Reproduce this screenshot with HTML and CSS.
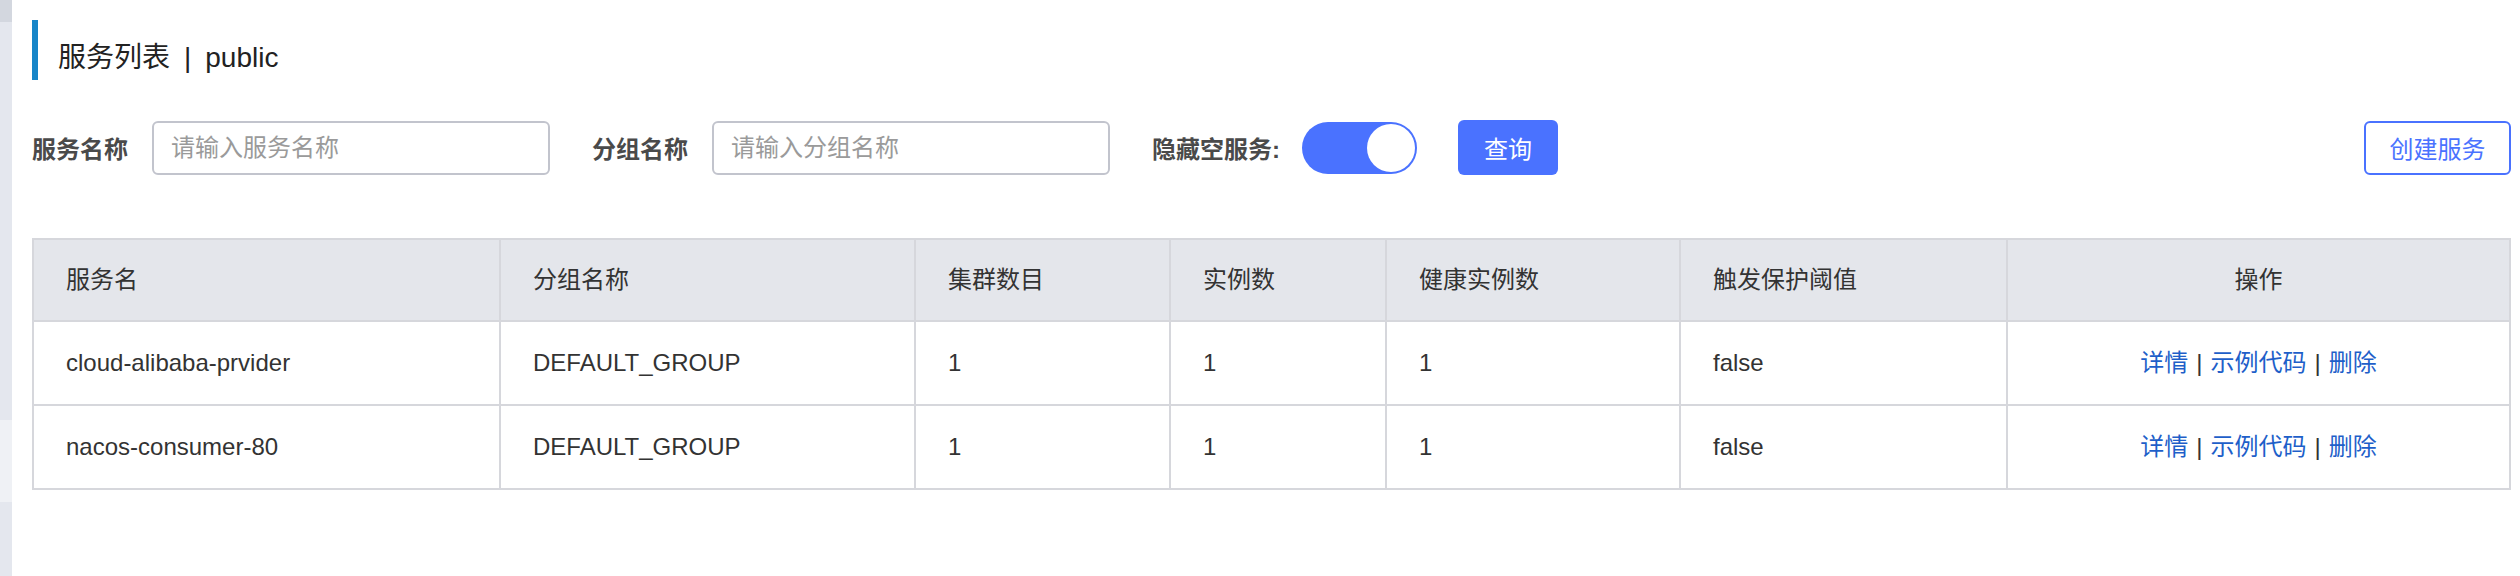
FILE: index.html
```html
<!DOCTYPE html>
<html lang="zh-CN">
<head>
<meta charset="utf-8">
<title>服务列表</title>
<link rel="stylesheet" href="styles.css">
</head>
<body>
<div class="page">
  <aside class="rail">
    <div class="rail-top"></div>
    <div class="rail-mid"></div>
    <div class="rail-light"></div>
    <div class="rail-bottom"></div>
  </aside>
  <main class="main">
    <h1 class="title"><span>服务列表</span><span class="sep">|</span><span>public</span></h1>
    <form class="filters">
      <label class="flabel">服务名称</label>
      <input class="finput" type="text" placeholder="请输入服务名称">
      <label class="flabel spaced">分组名称</label>
      <input class="finput" type="text" placeholder="请输入分组名称">
      <label class="flabel spaced">隐藏空服务:</label>
      <span class="switch"><span class="knob"></span></span>
      <button class="btn-primary" type="button">查询</button>
      <button class="btn-outline" type="button">创建服务</button>
    </form>
    <table class="grid">
      <colgroup>
        <col class="c1"><col class="c2"><col class="c3"><col class="c4"><col class="c5"><col class="c6"><col class="c7">
      </colgroup>
      <thead>
        <tr>
          <th>服务名</th>
          <th>分组名称</th>
          <th>集群数目</th>
          <th>实例数</th>
          <th>健康实例数</th>
          <th>触发保护阈值</th>
          <th class="center">操作</th>
        </tr>
      </thead>
      <tbody>
        <tr>
          <td>cloud-alibaba-prvider</td>
          <td>DEFAULT_GROUP</td>
          <td>1</td>
          <td>1</td>
          <td>1</td>
          <td>false</td>
          <td class="center"><a class="link">详情</a><span class="bar">|</span><a class="link">示例代码</a><span class="bar">|</span><a class="link">删除</a></td>
        </tr>
        <tr>
          <td>nacos-consumer-80</td>
          <td>DEFAULT_GROUP</td>
          <td>1</td>
          <td>1</td>
          <td>1</td>
          <td>false</td>
          <td class="center"><a class="link">详情</a><span class="bar">|</span><a class="link">示例代码</a><span class="bar">|</span><a class="link">删除</a></td>
        </tr>
      </tbody>
    </table>
  </main>
</div>
</body>
</html>
```

FILE: styles.css
```css
* {
  box-sizing: border-box;
}

html, body {
  margin: 0;
  padding: 0;
  background: #ffffff;
}

body {
  font-family: "Liberation Sans", "Noto Sans CJK SC", sans-serif;
  color: #333333;
}

.page {
  display: flex;
  min-height: 100vh;
}

.rail {
  width: 12px;
  flex: 0 0 12px;
  display: flex;
  flex-direction: column;
}

.rail-top {
  height: 22px;
  background: #d3d7df;
}

.rail-mid {
  height: 398px;
  background: #e4e7ee;
}

.rail-light {
  height: 82px;
  background: #eff1f5;
}

.rail-bottom {
  flex: 1;
  background: #e4e7ee;
}

.main {
  flex: 1;
  padding: 0 9px 0 20px;
}

.title {
  margin: 20px 0 0;
  height: 60px;
  border-left: 6px solid #1785c8;
  padding: 16px 0 0 20px;
  font-size: 28px;
  line-height: 44px;
  font-weight: normal;
  color: #222222;
  white-space: nowrap;
}

.title .sep {
  margin: 0 14px;
}

.filters {
  margin: 40px 0 0;
  height: 55px;
  display: flex;
  align-items: center;
}

.flabel {
  font-size: 24px;
  font-weight: 700;
  color: #4a4a4a;
  margin-right: 24px;
  white-space: nowrap;
}

.flabel.spaced {
  margin-left: 42px;
}

.finput {
  width: 398px;
  height: 54px;
  border: 2px solid #c2c4cd;
  border-radius: 6px;
  padding: 0 17px;
  font-family: inherit;
  font-size: 24px;
  color: #333333;
  background: #ffffff;
  outline: none;
}

.finput::placeholder {
  color: #9a9a9a;
}

.switch {
  width: 115px;
  height: 52px;
  border-radius: 26px;
  background: #4a72ff;
  padding: 2px;
  display: flex;
  justify-content: flex-end;
  align-items: center;
  margin-left: -2px;
}

.knob {
  width: 48px;
  height: 48px;
  border-radius: 50%;
  background: #ffffff;
}

.btn-primary {
  margin-left: 41px;
  width: 100px;
  height: 55px;
  border: none;
  border-radius: 6px;
  background: #4a72ff;
  color: #ffffff;
  font-family: inherit;
  font-size: 24px;
  padding: 0;
}

.btn-outline {
  margin-left: auto;
  width: 147px;
  height: 54px;
  border: 2px solid #4a72ff;
  border-radius: 6px;
  background: #ffffff;
  color: #4a72ff;
  font-family: inherit;
  font-size: 24px;
  padding: 0;
}

.grid {
  margin-top: 63px;
  width: 2479px;
  table-layout: fixed;
  border-collapse: separate;
  border-spacing: 0;
  border-top: 2px solid #d6d7dc;
  border-left: 2px solid #d6d7dc;
  font-size: 24px;
  color: #333333;
}

.c1 { width: 467px; }
.c2 { width: 415px; }
.c3 { width: 255px; }
.c4 { width: 216px; }
.c5 { width: 294px; }
.c6 { width: 327px; }
.c7 { width: 503px; }

.grid th,
.grid td {
  border-right: 2px solid #d6d7dc;
  border-bottom: 2px solid #d6d7dc;
  padding: 0 0 0 32px;
  text-align: left;
  white-space: nowrap;
}

.grid th {
  background: #e4e6eb;
  font-weight: normal;
  line-height: 80px;
}

.grid td {
  line-height: 82px;
}

.grid .center {
  text-align: center;
  padding: 0;
}

.link {
  color: #1e5fc9;
  text-decoration: none;
}

.bar {
  margin: 0 8px;
  color: #333333;
}
```
